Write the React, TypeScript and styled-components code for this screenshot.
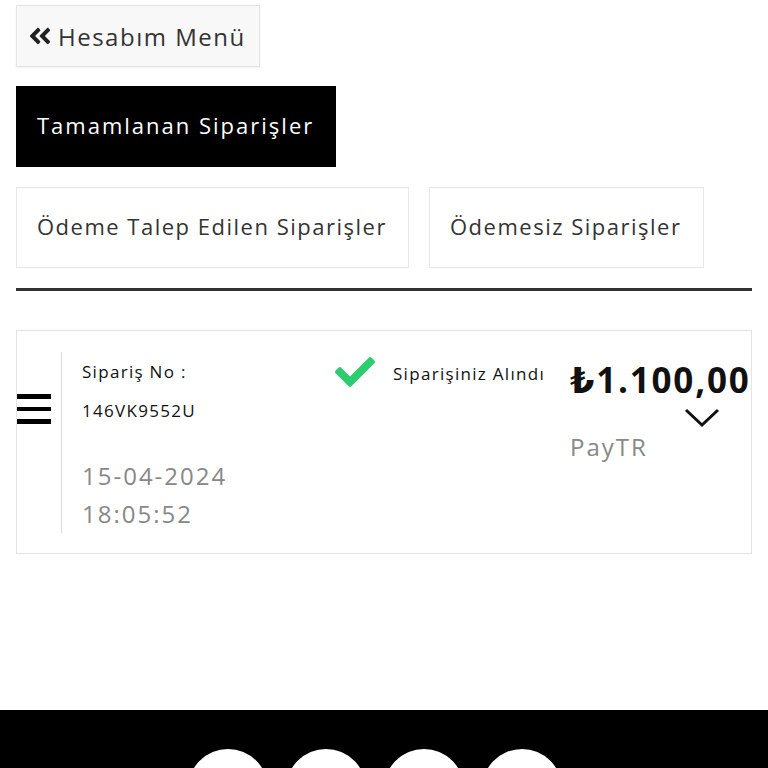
import React from "react";
import styled, { createGlobalStyle } from "styled-components";
import { FaCheck, FaAngleDoubleLeft } from "react-icons/fa";

const GlobalStyle = createGlobalStyle`
  html, body { margin: 0; padding: 0; background: #fff; }
  body { font-family: "Open Sans", "DejaVu Sans", sans-serif; color: #222; }
  * { box-sizing: border-box; }
`;

const Page = styled.div`
  display: flex;
  flex-direction: column;
  min-height: 768px;
`;

const Content = styled.div`
  padding: 5px 16px 0 16px;
  display: flex;
  flex-direction: column;
`;

const BackButton = styled.button`
  align-self: flex-start;
  height: 62px;
  width: 244px;
  display: flex;
  align-items: center;
  gap: 5px;
  padding: 0 10px;
  background: #f8f8f8;
  border: 1px solid #e3e3e3;
  box-shadow: 0 1px 2px rgba(0, 0, 0, 0.06);
  font-family: inherit;
  font-size: 24px;
  letter-spacing: 1.5px;
  color: #333;
  cursor: pointer;
`;

const TabRow = styled.div`
  display: flex;
  gap: 20px;
  margin-top: ${(p: { $top: number }) => p.$top}px;
`;

const Tab = styled.button<{ $active?: boolean; $w: number }>`
  height: 81px;
  width: ${(p) => p.$w}px;
  padding: 0 20px 3px 20px;
  text-align: left;
  font-family: inherit;
  font-size: 22px;
  letter-spacing: ${(p) => (p.$active ? 2 : 1.5)}px;
  white-space: nowrap;
  background: ${(p) => (p.$active ? "#000" : "#fff")};
  color: ${(p) => (p.$active ? "#fff" : "#333")};
  border: 1px solid ${(p) => (p.$active ? "#000" : "#e8e8e8")};
  cursor: pointer;
`;

const Divider = styled.hr`
  margin: 20px 0 0 0;
  border: none;
  height: 3px;
  background: #333;
`;

const Card = styled.div`
  margin-top: 39px;
  border: 1px solid #e4e4e4;
  height: 224px;
  display: flex;
  padding: 21px 0 20px 0;
`;

const Burger = styled.div`
  width: 34px;
  margin: 42px 10px 0 0;
  display: flex;
  flex-direction: column;
  gap: 8px;
  span {
    display: block;
    height: 4.5px;
    background: #000;
  }
`;

const Info = styled.div`
  width: 274px;
  border-left: 1px solid #dcdcdc;
  padding-left: 20px;
  display: flex;
  flex-direction: column;
`;

const Small = styled.div<{ $top?: number }>`
  font-size: 17px;
  letter-spacing: 1.3px;
  color: #111;
  line-height: 24px;
  white-space: nowrap;
  margin-top: ${(p) => p.$top ?? 0}px;
`;

const Muted = styled.div<{ $top?: number }>`
  font-size: 24px;
  letter-spacing: 2px;
  color: #888;
  line-height: 38px;
  margin-top: ${(p) => p.$top ?? 0}px;
`;

const Status = styled.div`
  width: 235px;
  display: flex;
  align-items: flex-start;
  gap: 18px;
  svg { color: #2ecc71; flex: none; }
`;

const Price = styled.div`
  flex: 1;
  display: flex;
  flex-direction: column;
`;

const Amount = styled.div`
  font-size: 35px;
  letter-spacing: 1.8px;
  font-weight: 700;
  color: #111;
  line-height: 44px;
  margin-top: 6px;
  white-space: nowrap;
`;

const Chevron = styled.svg`
  align-self: flex-end;
  margin: 6px 31px 0 0;
`;

const Footer = styled.footer`
  margin-top: auto;
  background: #000;
  height: 58px;
  display: flex;
  justify-content: center;
  gap: 18px;
  padding: 39px 18px 0 0;
  overflow: hidden;
`;

const Circle = styled.div`
  width: 80px;
  height: 80px;
  border-radius: 50%;
  background: #fff;
  flex: none;
`;

export default function App() {
  return (
    <Page>
      <GlobalStyle />
      <Content>
        <BackButton>
          <FaAngleDoubleLeft size={26} color="#222" />
          Hesabım Menü
        </BackButton>
        <TabRow $top={19}>
          <Tab $active $w={320}>Tamamlanan Siparişler</Tab>
        </TabRow>
        <TabRow $top={20}>
          <Tab $w={393}>Ödeme Talep Edilen Siparişler</Tab>
          <Tab $w={275}>Ödemesiz Siparişler</Tab>
        </TabRow>
        <Divider />
        <Card>
          <Burger>
            <span />
            <span />
            <span />
          </Burger>
          <Info>
            <Small $top={8}>Sipariş No :</Small>
            <Small $top={15}>146VK9552U</Small>
            <Muted $top={34}>15-04-2024</Muted>
            <Muted>18:05:52</Muted>
          </Info>
          <Status>
            <FaCheck size={40} />
            <Small $top={10}>Siparişiniz Alındı</Small>
          </Status>
          <Price>
            <Amount>₺1.100,00</Amount>
            <Chevron width="36" height="20" viewBox="0 0 36 20">
              <polyline points="2,2 18,17 34,2" fill="none" stroke="#111" strokeWidth="3" />
            </Chevron>
            <Muted $top={0}>PayTR</Muted>
          </Price>
        </Card>
      </Content>
      <Footer>
        <Circle />
        <Circle />
        <Circle />
        <Circle />
      </Footer>
    </Page>
  );
}
